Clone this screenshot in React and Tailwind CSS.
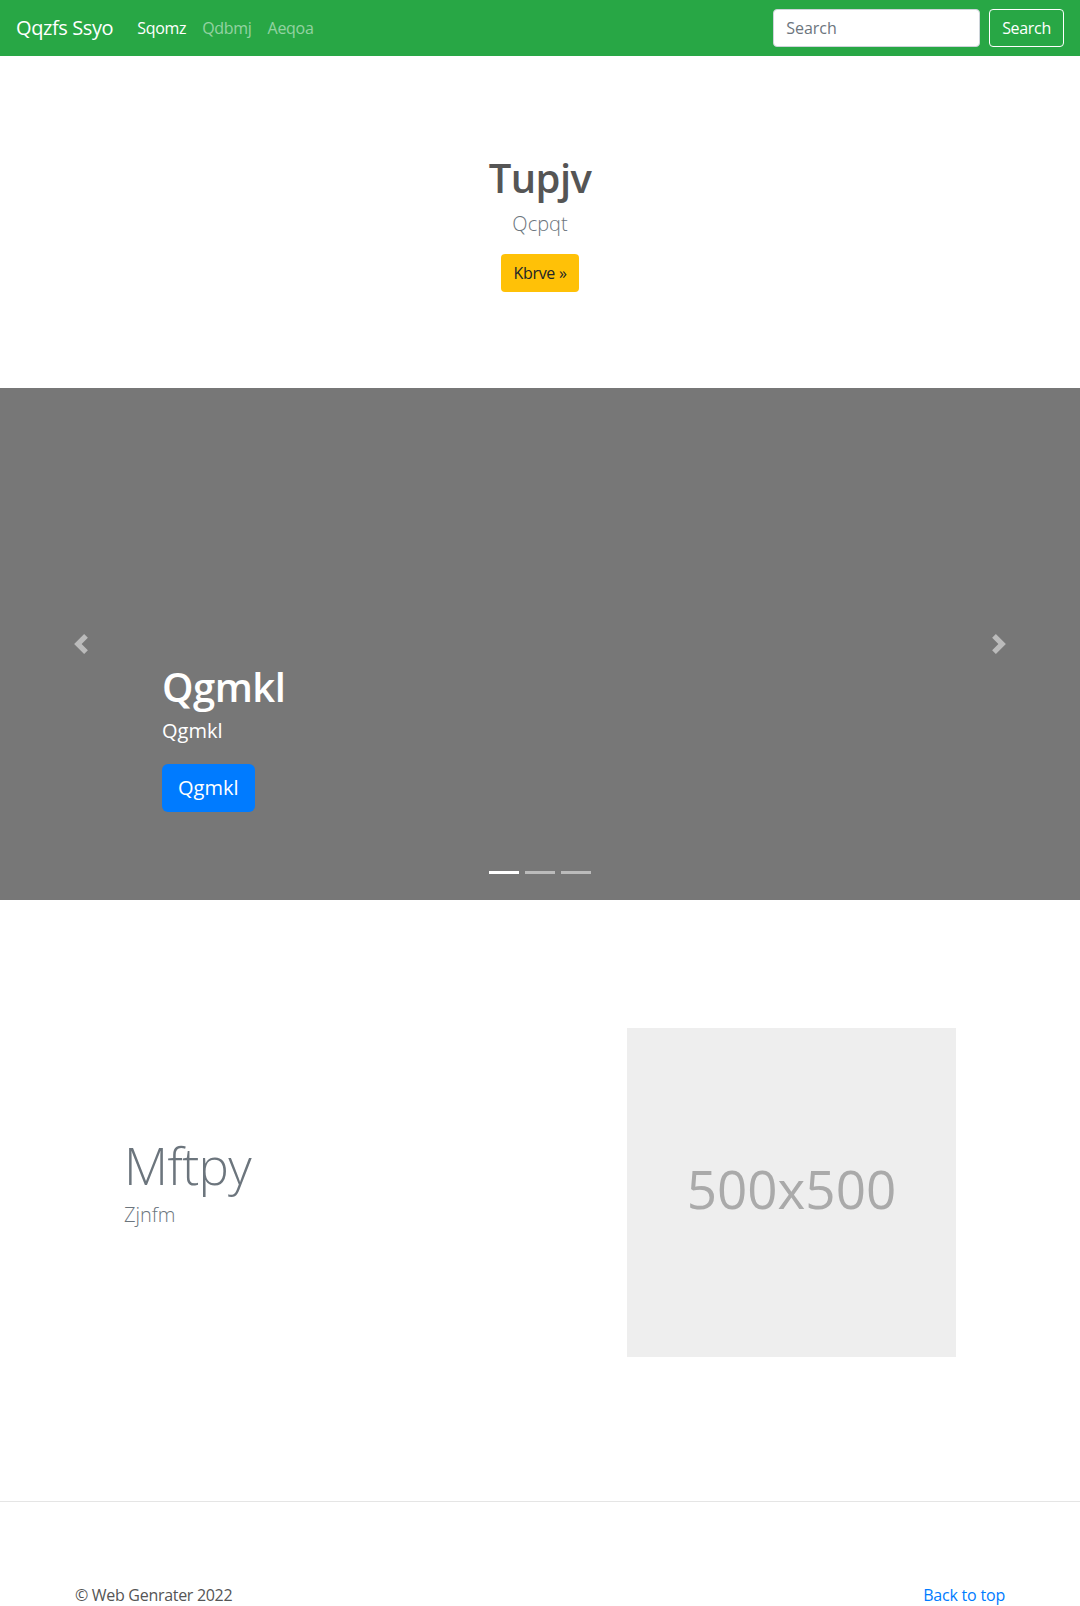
import { useState } from "react";

const font = { fontFamily: '"Open Sans", "Noto Sans", Arial, sans-serif' };

const ChevronLeft = () => (
	<svg className="w-5 h-5" viewBox="0 0 8 8" fill="#fff" fillOpacity="0.5">
		<path d="M5.25 0l-4 4 4 4 1.5-1.5L4.25 4l2.5-2.5L5.25 0z" />
	</svg>
);

const ChevronRight = () => (
	<svg className="w-5 h-5" viewBox="0 0 8 8" fill="#fff" fillOpacity="0.5">
		<path d="M2.75 0l-1.5 1.5L3.75 4l-2.5 2.5L2.75 8l4-4-4-4z" />
	</svg>
);

function Navbar() {
	const links = ["Sqomz", "Qdbmj", "Aeqoa"];
	return (
		<nav className="h-[56px] bg-[#28a745] flex items-center px-4">
			<a className="text-[20px] leading-[30px] tracking-[-0.4px] text-white mr-4">Qqzfs Ssyo</a>
			<ul className="flex flex-1">
				{links.map((l, i) => (
					<li key={l}>
						<a
							className={`block px-2 text-[16px] leading-6 tracking-[-0.3px] ${
								i === 0 ? "text-white" : "text-white/50"
							}`}
						>
							{l}
						</a>
					</li>
				))}
			</ul>
			<form className="flex items-center" onSubmit={(e) => e.preventDefault()}>
				<input
					className="w-[207px] h-[38px] rounded bg-white border border-[#ced4da] px-3 text-[16px] text-[#495057] placeholder:text-[#6c757d] mr-[9px] outline-none"
					placeholder="Search"
				/>
				<button
					type="submit"
					className="h-[38px] px-3 rounded border border-white text-white text-[16px] tracking-[-0.3px]"
				>
					Search
				</button>
			</form>
		</nav>
	);
}

function Hero() {
	return (
		<section className="h-[332px] flex flex-col items-center pt-[98px]">
			<h1 className="text-[40px] leading-[48px] font-semibold tracking-[-0.6px] text-[#555]">Tupjv</h1>
			<p className="mt-[7px] text-[20px] leading-[30px] font-light text-[#6c757d]">Qcpqt</p>
			<a className="mt-[15px] h-[38px] px-3 flex items-center rounded bg-[#ffc107] text-[#212529] text-[16px] tracking-[-0.3px]">
				Kbrve »
			</a>
		</section>
	);
}

function Carousel() {
	const [active, setActive] = useState(0);
	return (
		<div className="relative h-[512px] bg-[#777] flex flex-col justify-end pl-[162px] pb-[88px]">
			<h1 className="text-[40px] leading-[48px] font-semibold tracking-[-0.5px] text-white">Qgmkl</h1>
			<p className="mt-[5px] text-[20px] leading-[30px] text-white">Qgmkl</p>
			<div className="mt-[18px]">
				<a className="inline-flex items-center h-[48px] px-4 rounded-md bg-[#007bff] text-white text-[20px]">
					Qgmkl
				</a>
			</div>
			<button className="absolute left-0 top-0 h-full w-[15%] flex items-center justify-center">
				<ChevronLeft />
			</button>
			<button className="absolute right-0 top-0 h-full w-[15%] flex items-center justify-center">
				<ChevronRight />
			</button>
			<ol className="absolute bottom-[26px] left-0 right-0 flex justify-center gap-[6px]">
				{[0, 1, 2].map((i) => (
					<li
						key={i}
						onClick={() => setActive(i)}
						className={`w-[30px] h-[3px] ${i === active ? "bg-white" : "bg-white/50"}`}
					/>
				))}
			</ol>
		</div>
	);
}

function Featurette() {
	return (
		<section className="flex items-center pt-[128px] pb-[144px] pl-[124px] pr-[124px]">
			<div className="flex-1 -mt-[16px]">
				<h2 className="text-[51px] leading-[50px] font-light tracking-[-0.6px] text-[#6c757d]">
					Mftpy
				</h2>
				<p className="mt-[10px] text-[20px] leading-[30px] font-light text-[#6c757d]">Zjnfm</p>
			</div>
			<div className="w-[329px] h-[329px] bg-[#eee] flex items-center justify-center">
				<span className="text-[53px] leading-none -mt-[8px] text-[#aaa]">500x500</span>
			</div>
		</section>
	);
}

function Footer() {
	return (
		<footer className="border-t border-[#e5e5e5] pt-[81px] px-[75px] flex justify-between text-[16px] leading-6">
			<p className="text-[#555] tracking-[-0.3px]">© Web Genrater 2022</p>
			<a className="text-[#007bff] tracking-[-0.2px]">Back to top</a>
		</footer>
	);
}

export default function App() {
	return (
		<div className="bg-white min-h-[1606px]" style={font}>
			<Navbar />
			<Hero />
			<Carousel />
			<Featurette />
			<Footer />
		</div>
	);
}
